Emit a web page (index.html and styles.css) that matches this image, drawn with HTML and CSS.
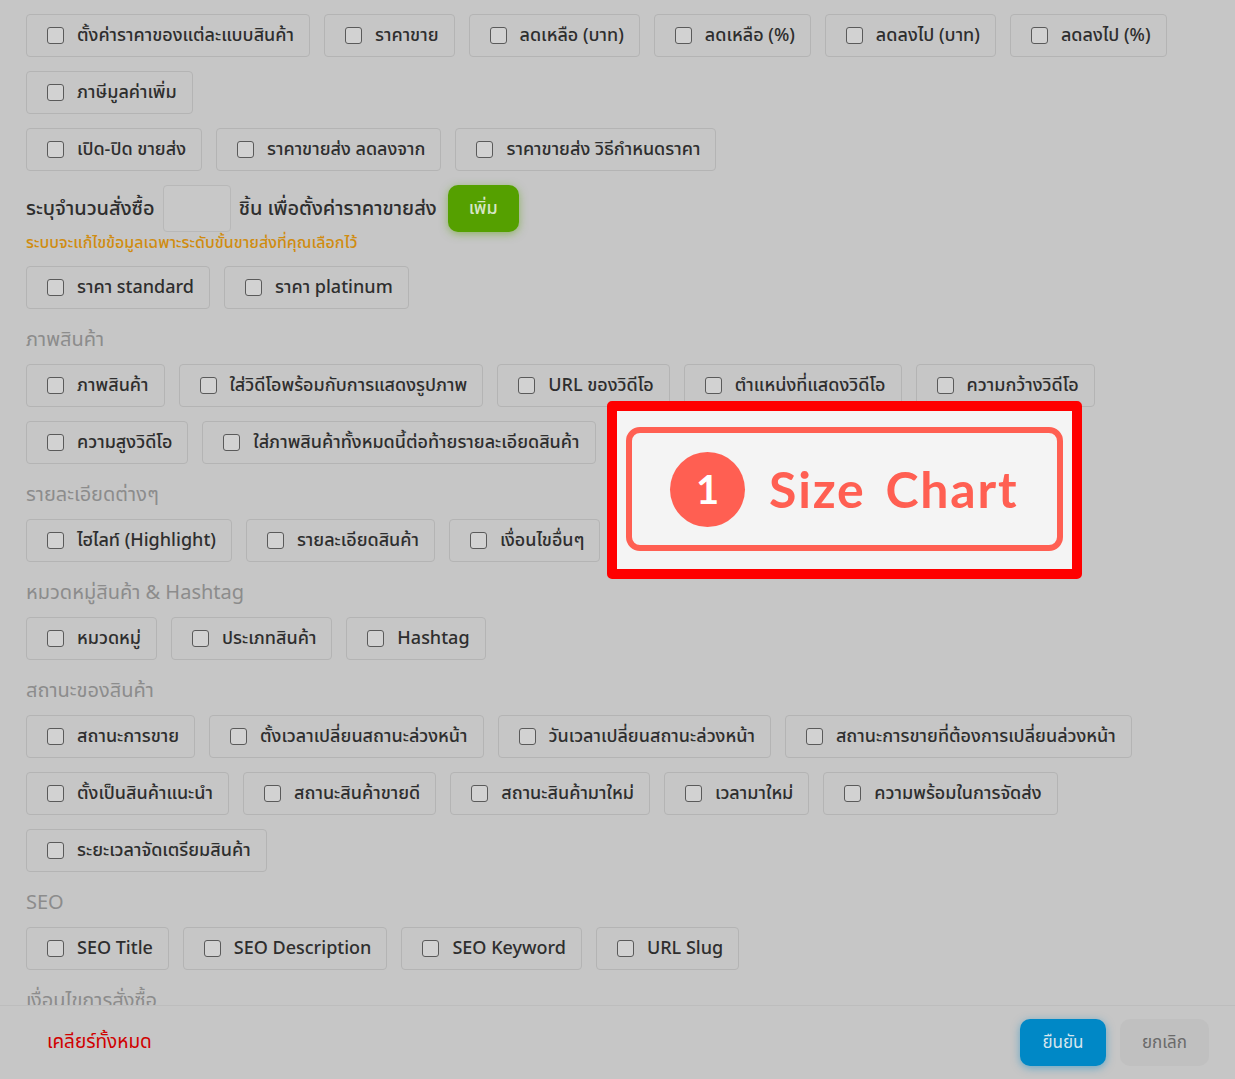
FILE: index.html
```html
<!DOCTYPE html>
<html lang="th">
  <head>
    <meta charset="UTF-8" />
    <meta name="viewport" content="width=device-width, initial-scale=1.0" />
    <title>เลือกข้อมูลที่ต้องการแก้ไข</title>
    <link rel="stylesheet" href="styles.css">
  </head>
  <body>
    <div class="modal">
      <div class="modal-body">
        <div class="chip-row">
          <label class="chip"><span class="box"></span>ตั้งค่าราคาของแต่ละแบบสินค้า</label>
          <label class="chip"><span class="box"></span>ราคาขาย</label>
          <label class="chip"><span class="box"></span>ลดเหลือ (บาท)</label>
          <label class="chip"><span class="box"></span>ลดเหลือ (%)</label>
          <label class="chip"><span class="box"></span>ลดลงไป (บาท)</label>
          <label class="chip"><span class="box"></span>ลดลงไป (%)</label>
        </div>
        <div class="chip-row">
          <label class="chip"><span class="box"></span>ภาษีมูลค่าเพิ่ม</label>
        </div>
        <div class="chip-row">
          <label class="chip"><span class="box"></span>เปิด-ปิด ขายส่ง</label>
          <label class="chip"><span class="box"></span>ราคาขายส่ง ลดลงจาก</label>
          <label class="chip"><span class="box"></span>ราคาขายส่ง วิธีกำหนดราคา</label>
        </div>
        <div class="qty-line">
          <span>ระบุจำนวนสั่งซื้อ</span>
          <input class="qty-input" type="text" />
          <span>ชิ้น เพื่อตั้งค่าราคาขายส่ง</span>
          <button class="btn-add">เพิ่ม</button>
        </div>
        <div class="note">ระบบจะแก้ไขข้อมูลเฉพาะระดับขั้นขายส่งที่คุณเลือกไว้</div>
        <div class="chip-row">
          <label class="chip"><span class="box"></span>ราคา standard</label>
          <label class="chip"><span class="box"></span>ราคา platinum</label>
        </div>

        <div class="section-title">ภาพสินค้า</div>
        <div class="chip-row">
          <label class="chip"><span class="box"></span>ภาพสินค้า</label>
          <label class="chip"><span class="box"></span>ใส่วิดีโอพร้อมกับการแสดงรูปภาพ</label>
          <label class="chip"><span class="box"></span>URL ของวิดีโอ</label>
          <label class="chip"><span class="box"></span>ตำแหน่งที่แสดงวิดีโอ</label>
          <label class="chip"><span class="box"></span>ความกว้างวิดีโอ</label>
        </div>
        <div class="chip-row">
          <label class="chip"><span class="box"></span>ความสูงวิดีโอ</label>
          <label class="chip"><span class="box"></span>ใส่ภาพสินค้าทั้งหมดนี้ต่อท้ายรายละเอียดสินค้า</label>
        </div>

        <div class="section-title">รายละเอียดต่างๆ</div>
        <div class="chip-row">
          <label class="chip"><span class="box"></span>ไฮไลท์ (Highlight)</label>
          <label class="chip"><span class="box"></span>รายละเอียดสินค้า</label>
          <label class="chip"><span class="box"></span>เงื่อนไขอื่นๆ</label>
        </div>

        <div class="section-title">หมวดหมู่สินค้า &amp; Hashtag</div>
        <div class="chip-row">
          <label class="chip"><span class="box"></span>หมวดหมู่</label>
          <label class="chip"><span class="box"></span>ประเภทสินค้า</label>
          <label class="chip"><span class="box"></span>Hashtag</label>
        </div>

        <div class="section-title">สถานะของสินค้า</div>
        <div class="chip-row">
          <label class="chip"><span class="box"></span>สถานะการขาย</label>
          <label class="chip"><span class="box"></span>ตั้งเวลาเปลี่ยนสถานะล่วงหน้า</label>
          <label class="chip"><span class="box"></span>วันเวลาเปลี่ยนสถานะล่วงหน้า</label>
          <label class="chip"><span class="box"></span>สถานะการขายที่ต้องการเปลี่ยนล่วงหน้า</label>
        </div>
        <div class="chip-row">
          <label class="chip"><span class="box"></span>ตั้งเป็นสินค้าแนะนำ</label>
          <label class="chip"><span class="box"></span>สถานะสินค้าขายดี</label>
          <label class="chip"><span class="box"></span>สถานะสินค้ามาใหม่</label>
          <label class="chip"><span class="box"></span>เวลามาใหม่</label>
          <label class="chip"><span class="box"></span>ความพร้อมในการจัดส่ง</label>
        </div>
        <div class="chip-row">
          <label class="chip"><span class="box"></span>ระยะเวลาจัดเตรียมสินค้า</label>
        </div>

        <div class="section-title">SEO</div>
        <div class="chip-row">
          <label class="chip"><span class="box"></span>SEO Title</label>
          <label class="chip"><span class="box"></span>SEO Description</label>
          <label class="chip"><span class="box"></span>SEO Keyword</label>
          <label class="chip"><span class="box"></span>URL Slug</label>
        </div>

        <div class="section-title">เงื่อนไขการสั่งซื้อ</div>
      </div>

      <div class="modal-footer">
        <a class="clear-all">เคลียร์ทั้งหมด</a>
        <div class="footer-actions">
          <button class="btn-confirm">ยืนยัน</button>
          <button class="btn-cancel">ยกเลิก</button>
        </div>
      </div>

      <!-- กล่องไฮไลท์ -->
      <div class="callout">
        <div class="callout-inner">
          <span class="callout-num">1</span>
          <span class="callout-text">Size Chart</span>
        </div>
      </div>
    </div>
  </body>
</html>
```

FILE: styles.css
```css
* {
  box-sizing: border-box;
  font-family: "Noto Sans Thai", "Noto Sans", "Noto Sans Thai UI", sans-serif;
}
body {
  margin: 0;
  padding: 0;
  background-color: #c6c6c6;
  color: #333;
  height: 100vh;
  overflow: hidden;
}
.modal {
  position: relative;
  height: 100vh;
}
.modal-body {
  padding: 14px 26px 0;
  height: 1005px;
  overflow: hidden;
}
.chip-row {
  display: flex;
  flex-wrap: wrap;
  gap: 14px;
  margin-bottom: 14px;
}
.chip {
  display: flex;
  align-items: center;
  height: 43px;
  padding: 0 15px 0 20px;
  border: 1px solid #b4b4b4;
  border-radius: 4px;
  font-size: 18px;
  font-weight: 500;
  color: #2e2e2e;
  white-space: nowrap;
}
.box {
  width: 17px;
  height: 17px;
  border: 1.5px solid #5a5a5a;
  border-radius: 3px;
  background-color: #d2d2d2;
  margin-right: 13px;
  flex-shrink: 0;
}
.qty-line {
  display: flex;
  align-items: center;
  gap: 8px;
  height: 47px;
  font-size: 20px;
  font-weight: 500;
  color: #2e2e2e;
}
.qty-input {
  width: 68px;
  height: 47px;
  border: 1px solid #b8b8b8;
  border-radius: 4px;
  background-color: #c8c8c8;
}
.btn-add {
  margin-left: 3px;
  width: 71px;
  height: 47px;
  border: none;
  border-radius: 10px;
  background-color: #55a000;
  color: #d6e6c6;
  font-size: 18px;
  font-weight: 500;
  box-shadow: 0 2px 8px rgba(85, 160, 0, 0.5);
}
.note {
  font-size: 16px;
  font-weight: 500;
  color: #d08c10;
  height: 20px;
  line-height: 20px;
  margin: 1px 0 13px;
}
.section-title {
  display: flex;
  align-items: center;
  height: 26px;
  font-size: 20px;
  color: #8c8c8c;
  margin: 18px 0 11px;
  white-space: nowrap;
}
.modal-footer {
  position: absolute;
  left: 0;
  right: 0;
  bottom: 0;
  height: 74px;
  display: flex;
  align-items: center;
  justify-content: space-between;
  padding: 0 26px 0 47px;
  border-top: 1px solid #bdbdbd;
  background-color: #c6c6c6;
}
.clear-all {
  color: #d00000;
  font-size: 19px;
}
.footer-actions {
  display: flex;
  gap: 14px;
}
.btn-confirm,
.btn-cancel {
  height: 47px;
  border: none;
  border-radius: 10px;
  font-size: 17px;
}
.btn-confirm {
  width: 86px;
  background-color: #0088c6;
  color: #d5e5ee;
  box-shadow: 0 2px 8px rgba(0, 136, 198, 0.5);
}
.btn-cancel {
  width: 89px;
  background-color: #c0c0c0;
  color: #6a6a6a;
}
.callout {
  position: absolute;
  left: 607px;
  top: 401px;
  width: 475px;
  height: 178px;
  border: 10px solid #ff0000;
  border-radius: 5px;
  background-color: #f4f4f4;
  padding: 16px 9px 18px 9px;
}
.callout-inner {
  height: 100%;
  border: 6px solid #ff5f52;
  border-radius: 14px;
  display: flex;
  align-items: center;
  padding-left: 38px;
  gap: 24px;
}
.callout-num {
  width: 75px;
  height: 75px;
  border-radius: 50%;
  background-color: #ff5f52;
  color: #fff;
  font-family: "Lato", sans-serif;
  font-weight: 700;
  font-size: 40px;
  display: flex;
  align-items: center;
  justify-content: center;
}
.callout-text {
  font-family: "Lato", sans-serif;
  font-weight: 700;
  font-size: 50px;
  letter-spacing: 1.8px;
  color: #ff5f52;
  word-spacing: 6px;
}
```
